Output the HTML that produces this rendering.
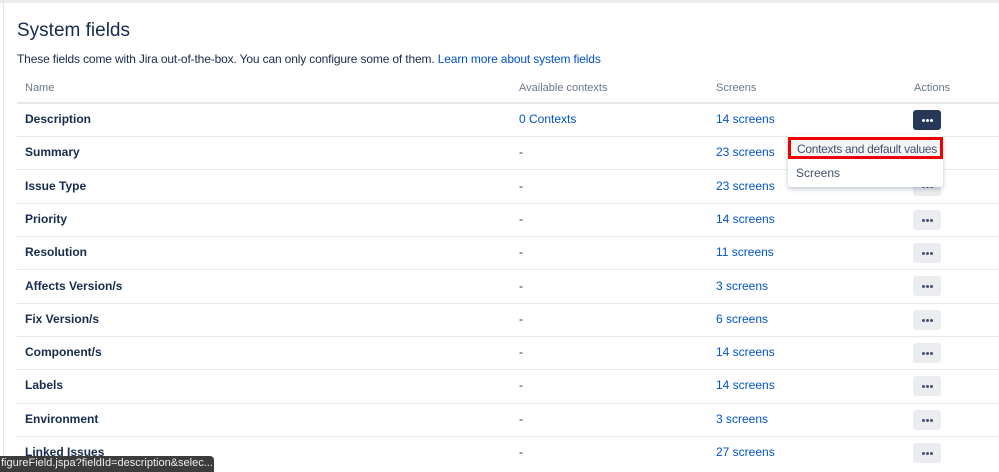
<!DOCTYPE html>
<html><head><meta charset="utf-8"><style>
*{box-sizing:border-box;margin:0;padding:0}
body{width:999px;height:470px;overflow:hidden;background:#fff;font-family:"Liberation Sans",sans-serif;color:#172b4d;position:relative}
.top{position:absolute;left:0;top:0;width:999px;height:3px;background:#ebecf0}
.left{position:absolute;left:3px;top:0;width:1px;height:470px;background:#e4e5e9}
h1{position:absolute;left:17px;top:20px;font-size:19px;font-weight:normal;color:#172b4d}
.desc{position:absolute;left:17px;top:52px;font-size:12px;color:#172b4d;letter-spacing:-0.15px}
a{color:#0052cc;text-decoration:none}
.hdr{position:absolute;top:82px;font-size:11px;color:#6b778c}
.line{position:absolute;left:17px;right:0;height:2px;background:#e6e8ec}
.row{position:absolute;left:0;width:999px;font-size:12px}
.row span{position:absolute;top:0}
.n{left:25px;font-weight:bold}
.c{left:519px}
.s{left:716px;color:#0052cc}
.b{position:absolute;left:913px;width:28px;height:20px;background:#ebecf0;border-radius:3px}
.b i{position:absolute;top:9px;width:3px;height:3px;border-radius:50%;background:#42526e}
.b.d{background:#253858}.b.d i{background:#fff}
.menu{position:absolute;left:788px;top:135px;width:155px;height:52px;background:#fff;box-shadow:0 2px 5px rgba(9,30,66,.25);border-radius:3px;font-size:12px;color:#42526e}
.status{position:absolute;left:0;top:456px;width:214px;height:16px;background:#3c3c3c;border-radius:0 4px 0 0;color:#eee;font-size:11px;line-height:14px;padding-left:1px;white-space:nowrap;overflow:hidden}
</style></head><body>
<div class="top"></div><div class="left"></div>
<h1>System fields</h1>
<div class="desc">These fields come with Jira out-of-the-box. You can only configure some of them. <a>Learn more about system fields</a></div>
<div class="hdr" style="left:25px">Name</div>
<div class="hdr" style="left:519px">Available contexts</div>
<div class="hdr" style="left:716px">Screens</div>
<div class="hdr" style="left:914px">Actions</div>
<div class="line" style="top:102px"></div>

<div class="row" style="top:112px"><span class="n">Description</span><span class="c"><a>0 Contexts</a></span><span class="s">14 screens</span></div>
<div class="row" style="top:145px"><span class="n">Summary</span><span class="c">-</span><span class="s">23 screens</span></div>
<div class="row" style="top:179px"><span class="n">Issue Type</span><span class="c">-</span><span class="s">23 screens</span></div>
<div class="row" style="top:212px"><span class="n">Priority</span><span class="c">-</span><span class="s">14 screens</span></div>
<div class="row" style="top:245px"><span class="n">Resolution</span><span class="c">-</span><span class="s">11 screens</span></div>
<div class="row" style="top:279px"><span class="n">Affects Version/s</span><span class="c">-</span><span class="s">3 screens</span></div>
<div class="row" style="top:312px"><span class="n">Fix Version/s</span><span class="c">-</span><span class="s">6 screens</span></div>
<div class="row" style="top:345px"><span class="n">Component/s</span><span class="c">-</span><span class="s">14 screens</span></div>
<div class="row" style="top:378px"><span class="n">Labels</span><span class="c">-</span><span class="s">14 screens</span></div>
<div class="row" style="top:412px"><span class="n">Environment</span><span class="c">-</span><span class="s">3 screens</span></div>
<div class="row" style="top:445px"><span class="n">Linked Issues</span><span class="c">-</span><span class="s">27 screens</span></div>

<div class="line" style="top:136px;height:1px"></div>
<div class="line" style="top:169px;height:1px"></div>
<div class="line" style="top:203px;height:1px"></div>
<div class="line" style="top:236px;height:1px"></div>
<div class="line" style="top:269px;height:1px"></div>
<div class="line" style="top:303px;height:1px"></div>
<div class="line" style="top:336px;height:1px"></div>
<div class="line" style="top:369px;height:1px"></div>
<div class="line" style="top:403px;height:1px"></div>
<div class="line" style="top:436px;height:1px"></div>

<div class="b d" style="top:110px"><i style="left:9px"></i><i style="left:13px"></i><i style="left:17px"></i></div>
<div class="b" style="top:176px"><i style="left:9px"></i><i style="left:13px"></i><i style="left:17px"></i></div>
<div class="b" style="top:210px"><i style="left:9px"></i><i style="left:13px"></i><i style="left:17px"></i></div>
<div class="b" style="top:243px"><i style="left:9px"></i><i style="left:13px"></i><i style="left:17px"></i></div>
<div class="b" style="top:276px"><i style="left:9px"></i><i style="left:13px"></i><i style="left:17px"></i></div>
<div class="b" style="top:310px"><i style="left:9px"></i><i style="left:13px"></i><i style="left:17px"></i></div>
<div class="b" style="top:343px"><i style="left:9px"></i><i style="left:13px"></i><i style="left:17px"></i></div>
<div class="b" style="top:376px"><i style="left:9px"></i><i style="left:13px"></i><i style="left:17px"></i></div>
<div class="b" style="top:410px"><i style="left:9px"></i><i style="left:13px"></i><i style="left:17px"></i></div>
<div class="b" style="top:443px"><i style="left:9px"></i><i style="left:13px"></i><i style="left:17px"></i></div>

<div class="menu">
<div style="position:absolute;left:0;top:2px;width:155px;height:22px;border:3px solid #e00;background:#f4f5f7;padding:2px 0 0 6px;color:#42526e;white-space:nowrap;letter-spacing:-0.3px">Contexts and default values</div>
<div style="position:absolute;left:8px;top:31px">Screens</div>
</div>
<div class="status">figureField.jspa?fieldId=description&amp;selec...</div>
</body></html>
